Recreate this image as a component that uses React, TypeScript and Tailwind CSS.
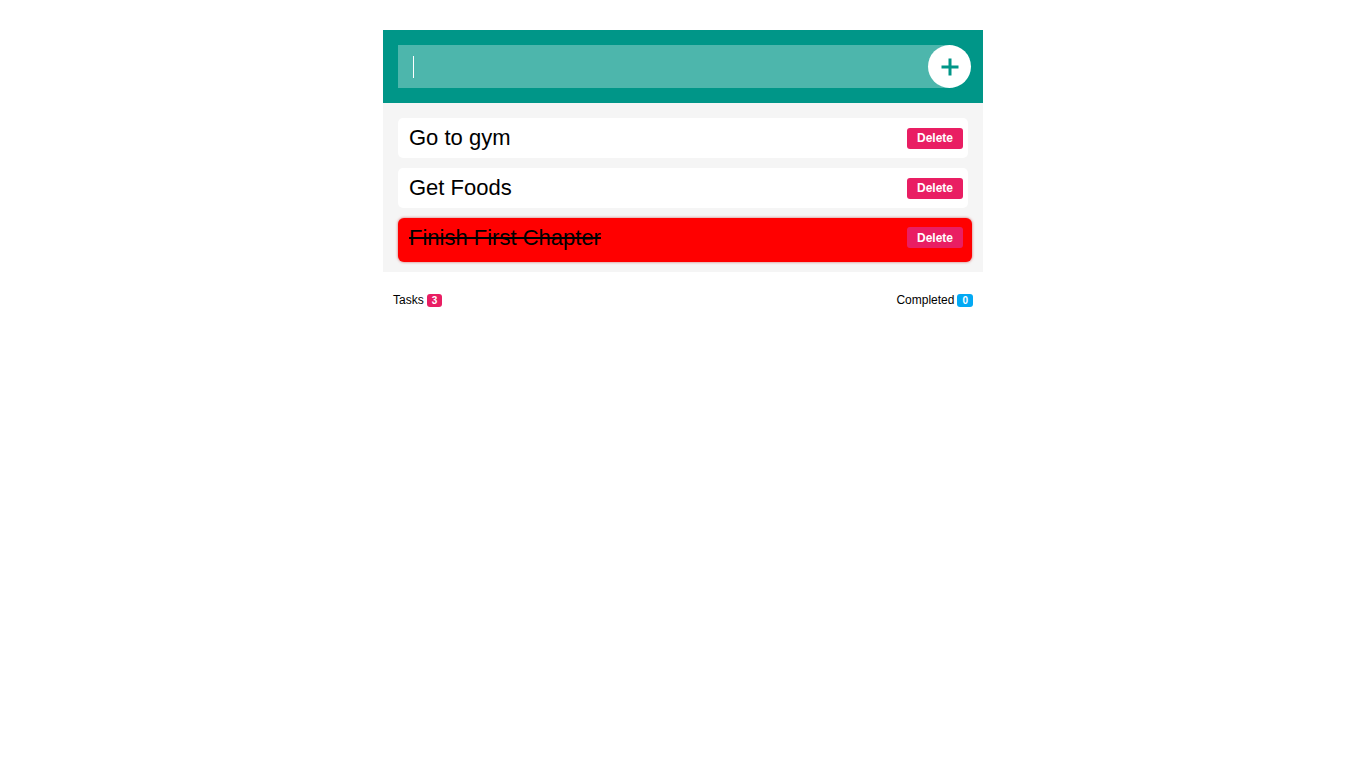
import { useState } from 'react';

interface Task {
  id: number;
  text: string;
  done: boolean;
}

const initialTasks: Task[] = [
  { id: 1, text: 'Go to gym', done: false },
  { id: 2, text: 'Get Foods', done: false },
  { id: 3, text: 'Finish First Chapter', done: true },
];

export default function App() {
  const [tasks] = useState<Task[]>(initialTasks);

  return (
    <div className="min-h-screen bg-white pt-[30px] font-['Liberation_Sans',Arial,sans-serif]">
      <div className="mx-auto w-[600px]">
        {/* Header with input */}
        <div className="flex items-center bg-[#009688] px-[15px] py-[15px]">
          <div className="relative flex h-[43px] flex-1 items-center">
            <div className="flex h-[43px] w-[555px] items-center bg-[#4db6ac] pl-[15px]">
              <span className="h-[22px] w-px bg-white" />
            </div>
            <button className="absolute right-[-3px] top-0 flex h-[43px] w-[43px] items-center justify-center rounded-full bg-white">
              <svg width="22" height="22" viewBox="0 0 22 22">
                <path d="M11 2.5v17M2.5 11h17" stroke="#009688" strokeWidth="3" />
              </svg>
            </button>
          </div>
        </div>

        {/* Task list */}
        <div className="flex flex-col gap-[10px] bg-[#f5f5f5] px-[15px] pb-[10px] pt-[15px]">
          {tasks.map((task) =>
            task.done ? (
              <div
                key={task.id}
                className="flex h-[44px] w-[574px] items-start justify-between rounded-[6px] bg-[#ff0000] pl-[11px] pr-[9px] pt-[9px] shadow-[0_0_3px_rgba(180,0,0,0.6)]"
              >
                <span className="text-[22px] leading-[22px] text-black line-through">{task.text}</span>
                <button className="h-[21px] w-[56px] rounded-[3px] bg-[#e91e63] text-[12px] font-bold text-white">
                  Delete
                </button>
              </div>
            ) : (
              <div
                key={task.id}
                className="flex h-[40px] items-center justify-between rounded-[5px] bg-white pl-[11px] pr-[5px]"
              >
                <span className="text-[22px] leading-none text-black">{task.text}</span>
                <button className="h-[21px] w-[56px] rounded-[3px] bg-[#e91e63] text-[12px] font-bold text-white">
                  Delete
                </button>
              </div>
            )
          )}
        </div>

        {/* Footer counts */}
        <div className="flex items-center justify-between px-[10px] pt-[19px] text-[12px] text-black">
          <div className="flex items-center gap-[3px]">
            <span>Tasks</span>
            <span className="rounded-[3px] bg-[#e91e63] px-[5px] text-[10px] font-bold leading-[13px] text-white">
              {tasks.length}
            </span>
          </div>
          <div className="flex items-center gap-[3px]">
            <span>Completed</span>
            <span className="rounded-[3px] bg-[#03a9f4] px-[5px] text-[10px] font-bold leading-[13px] text-white">
              0
            </span>
          </div>
        </div>
      </div>
    </div>
  );
}
